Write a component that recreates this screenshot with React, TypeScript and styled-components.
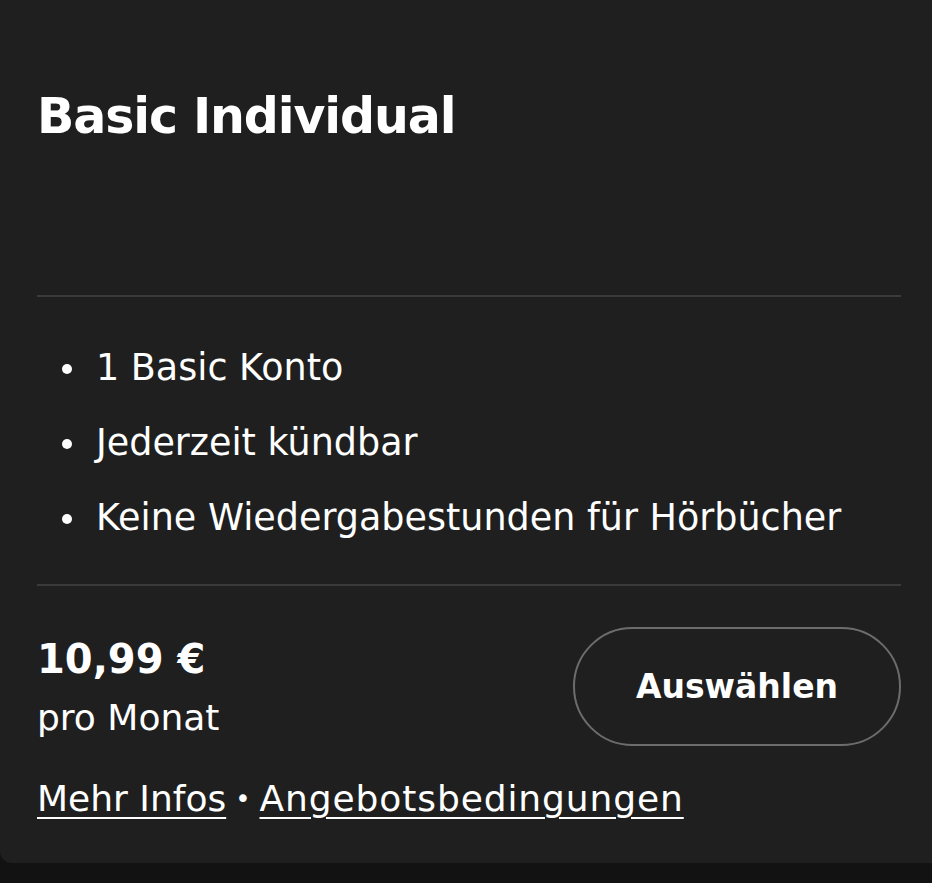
import React from "react";
import styled, { createGlobalStyle } from "styled-components";

const GlobalStyle = createGlobalStyle`
  html, body {
    margin: 0;
    padding: 0;
    background: #121212;
  }
  body {
    font-family: "DejaVu Sans", "Liberation Sans", sans-serif;
    color: #ffffff;
    -webkit-font-smoothing: antialiased;
  }
`;

const features = [
  "1 Basic Konto",
  "Jederzeit kündbar",
  "Keine Wiedergabestunden für Hörbücher",
];

export default function App(): React.JSX.Element {
  return (
    <>
      <GlobalStyle />
      <Card>
        <Header>
          <Title>Basic Individual</Title>
        </Header>
        <Divider />
        <FeatureList>
          {features.map((f) => (
            <FeatureItem key={f}>
              <Dot />
              {f}
            </FeatureItem>
          ))}
        </FeatureList>
        <Divider />
        <Footer>
          <PriceRow>
            <PriceBlock>
              <Price>10,99 €</Price>
              <Period>pro Monat</Period>
            </PriceBlock>
            <SelectButton type="button">Auswählen</SelectButton>
          </PriceRow>
          <Links>
            <LinkText href="#">Mehr Infos</LinkText>
            <Sep>•</Sep>
            <LinkText href="#" $spacing={0.9}>
              Angebotsbedingungen
            </LinkText>
          </Links>
        </Footer>
      </Card>
    </>
  );
}

const Card = styled.div`
  display: flex;
  flex-direction: column;
  background: #1f1f1f;
  border-radius: 0 0 0 12px;
  padding: 0 31px 0 37px;
  height: 863px;
  box-sizing: border-box;
`;

const Header = styled.div`
  height: 295px;
  padding-top: 89px;
  box-sizing: border-box;
`;

const Title = styled.h1`
  margin: 0;
  font-size: 49px;
  line-height: 56px;
  font-weight: 700;
  letter-spacing: -1.1px;
`;

const Divider = styled.div`
  height: 2px;
  background: #3a3a3a;
`;

const FeatureList = styled.ul`
  list-style: none;
  margin: 0;
  padding: 51px 0 46px 25px;
  display: flex;
  flex-direction: column;
  gap: 35px;
`;

const FeatureItem = styled.li`
  display: flex;
  align-items: center;
  gap: 24px;
  font-size: 36.5px;
  line-height: 40px;
`;

const Dot = styled.span`
  width: 10px;
  height: 10px;
  border-radius: 50%;
  background: #ffffff;
  flex-shrink: 0;
  margin-top: 2px;
`;

const Footer = styled.div`
  display: flex;
  flex-direction: column;
  padding-top: 41px;
`;

const PriceRow = styled.div`
  display: flex;
  justify-content: space-between;
  align-items: center;
`;

const PriceBlock = styled.div`
  display: flex;
  flex-direction: column;
  gap: 16px;
`;

const Price = styled.div`
  font-size: 40px;
  line-height: 46px;
  font-weight: 700;
`;

const Period = styled.div`
  font-size: 36px;
  line-height: 40px;
`;

const SelectButton = styled.button`
  width: 328px;
  height: 119px;
  border: 2px solid #6c6c6c;
  border-radius: 60px;
  background: transparent;
  color: #ffffff;
  font-family: "DejaVu Sans", "Liberation Sans", sans-serif;
  font-size: 33px;
  font-weight: 700;
  cursor: pointer;
`;

const Links = styled.div`
  display: flex;
  align-items: center;
  margin-top: 33px;
  font-size: 36px;
  line-height: 40px;
`;

const LinkText = styled.a<{ $spacing?: number }>`
  color: #ffffff;
  text-decoration: underline;
  text-decoration-thickness: 2px;
  text-underline-offset: 6px;
  letter-spacing: ${(p) => p.$spacing ?? 0}px;
`;

const Sep = styled.span`
  margin: 0 9px;
  font-size: 26px;
`;
